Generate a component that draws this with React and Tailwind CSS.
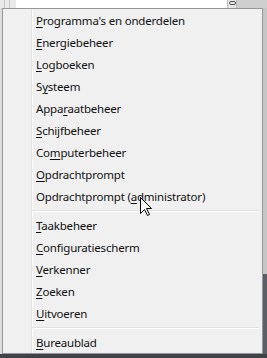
// App.jsx
// Windows 7 style Win+X context menu (Dutch)

import React from 'react'

const groups = [
  [
    ['', 'P', "rogramma's en onderdelen"],
    ['', 'E', 'nergiebeheer'],
    ['', 'L', 'ogboeken'],
    ['S', 'y', 'steem'],
    ['Appa', 'r', 'aatbeheer'],
    ['', 'S', 'chijfbeheer'],
    ['Co', 'm', 'puterbeheer'],
    ['', 'O', 'pdrachtprompt'],
    ['Opdrachtprompt (', 'a', 'dministrator)'],
  ],
  [
    ['', 'T', 'aakbeheer'],
    ['', 'C', 'onfiguratiescherm'],
    ['', 'V', 'erkenner'],
    ['', 'Z', 'oeken'],
    ['', 'U', 'itvoeren'],
  ],
  [['', 'B', 'ureaublad']],
]

function Item({ parts }) {
  const [pre, key, post] = parts
  return (
    <div className="h-[22px] flex items-center pl-[33px] pt-px text-[11.5px] tracking-[-0.2px] text-[#111]">
      <span>
        {pre}
        <span className="underline underline-offset-2">{key}</span>
        {post}
      </span>
    </div>
  )
}

function Separator() {
  return (
    <div className="h-[7px] flex flex-col justify-center pl-[29px] pr-[3px]">
      <div className="h-px bg-[#e0e0e0]" />
      <div className="h-px bg-white" />
    </div>
  )
}

export default function App() {
  return (
    <div
      className="relative w-[267px] h-[358px] overflow-hidden flex flex-col bg-[#c8c8c8]"
      style={{ fontFamily: '"Noto Sans", "Open Sans", sans-serif' }}
    >
      {/* window behind the menu */}
      <div className="h-[8px] flex">
        <div className="w-[16px] flex bg-[#e9e9e9]">
          <div className="w-[5px] border-r border-[#c9c9c9]" />
          <div className="w-[5px] border-r border-[#c9c9c9]" />
        </div>
        <div className="flex-1 bg-white" />
        <div className="w-[10px] bg-[#e6e6e6] border-x border-[#bdbdbd] flex justify-center">
          <div className="w-[7px] h-[4px] mt-[1px] rounded-full border border-[#555]" />
        </div>
        <div className="w-[30px] bg-[#cfcfcf]" />
      </div>

      <div className="flex-1 flex">
        <div className="w-[2px] bg-[#dcdcdc]" />
        <div className="relative w-[261px] bg-[#f0f0f0] border border-[#979797]">
          <div className="absolute top-0 bottom-0 left-[28px] w-[2px] flex">
            <div className="w-px bg-[#e2e3e3]" />
            <div className="w-px bg-white" />
          </div>
          <div className="relative">
            {groups.map((g, i) => (
              <div key={i}>
                {i > 0 && <Separator />}
                {g.map((p, j) => (
                  <Item key={j} parts={p} />
                ))}
              </div>
            ))}
          </div>
        </div>
        <div className="flex-1 flex flex-col">
          <div className="flex-1 bg-[#c6c6c6]" />
          <div className="h-[80px] bg-[#5b6068]" />
        </div>
      </div>

      <div className="h-[4px] bg-[#3f4246]" />

      {/* mouse pointer */}
      <svg
        className="absolute left-[140px] top-[197px]"
        width="13"
        height="20"
        viewBox="0 0 13 20"
      >
        <path
          d="M0.5 0.5 L0.5 16.5 L4.5 12.5 L7.5 18.5 L9.5 17.5 L6.5 11.5 L11.5 11.5 Z"
          fill="#fff"
          stroke="#000"
          strokeWidth="1"
          strokeLinejoin="miter"
        />
      </svg>
    </div>
  )
}
